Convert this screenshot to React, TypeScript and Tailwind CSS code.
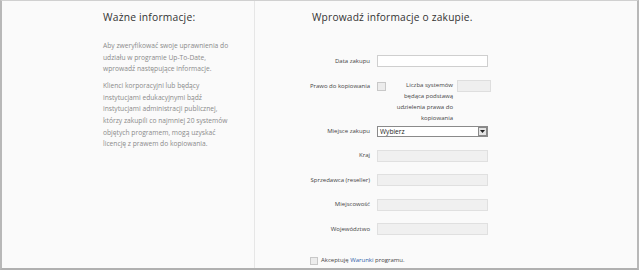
export default function App() {
  const rows = ["Kraj", "Sprzedawca (reseller)", "Miejscowość", "Województwo"];

  return (
    <div className="w-[640px] h-[271px] bg-white">
      <div
        className="w-[639px] h-[270px] bg-[#fafafa] border-l-2 border-r-2 border-b-2 border-t border-l-[#b8b8b8] border-r-[#b8b8b8] border-b-[#b0b0b0] border-t-[#d0d0d0] flex"
        style={{ fontFamily: '"Open Sans", "DejaVu Sans", sans-serif' }}
      >
        {/* left info column */}
        <div className="w-[253px] h-full border-r border-[#e6e6e6] pl-[101px] pr-2 pt-[8px] whitespace-nowrap">
          <h2 className="text-[10.3px] text-[#333] tracking-[0.2px] leading-[16px]">Ważne informacje:</h2>
          <div className="mt-[15px] text-[6.7px] leading-[11.6px] text-[#8a8a8a]">
            <p>
              Aby zweryfikować swoje uprawnienia do
              <br />
              udziału w programie Up-To-Date,
              <br />
              wprowadź następujące informacje.
            </p>
            <p className="mt-[5.5px]">
              Klienci korporacyjni lub będący
              <br />
              instytucjami edukacyjnymi bądź
              <br />
              instytucjami administracji publicznej,
              <br />
              którzy zakupili co najmniej 20 systemów
              <br />
              objętych programem, mogą uzyskać
              <br />
              licencję z prawem do kopiowania.
            </p>
          </div>
        </div>

        {/* right form column */}
        <div className="flex-1 h-full pt-[8px] whitespace-nowrap">
          <h2 className="pl-[57px] text-[10.2px] text-[#333] tracking-[0.2px] leading-[16px]">
            Wprowadź informacje o zakupie.
          </h2>

          <div className="mt-[30px] text-[6px] text-[#444]">
            <div className="flex items-center gap-[7px] h-[12px]">
              <span className="w-[115px] text-right">Data zakupu</span>
              <div className="w-[111px] h-[12px] bg-white border border-[#cfcfcf]" />
            </div>

            <div className="flex items-start mt-[13px]">
              <span className="w-[115px] text-right mt-[2px]">Prawo do kopiowania</span>
              <div className="ml-[7px] mt-[2px] w-[9px] h-[9px] bg-[#ececec] border border-[#c8c8c8]" />
              <span className="w-[64px] ml-[3px] text-right leading-[11px]">
                Liczba systemów
                <br />
                będąca podstawą
                <br />
                udzielenia prawa do
                <br />
                kopiowania
              </span>
              <div className="ml-[4px] w-[34px] h-[12px] bg-[#efefef] border border-[#dedede]" />
            </div>

            <div className="flex items-center gap-[7px] h-[11px] mt-[2px]">
              <span className="w-[115px] text-right">Miejsce zakupu</span>
              <div className="w-[111px] h-[11px] bg-white border border-[#8a8a8a] flex items-center justify-between">
                <span className="pl-[2px] text-[6.6px] text-[#222]">Wybierz</span>
                <div className="w-[9px] h-[9px] bg-[#e4e4e4] border border-[#888] flex items-center justify-center">
                  <svg width="5" height="3" viewBox="0 0 5 3">
                    <path d="M0 0 L5 0 L2.5 3 Z" fill="#222" />
                  </svg>
                </div>
              </div>
            </div>

            {rows.map((r) => (
              <div key={r} className="flex items-center gap-[7px] h-[12px] mt-[12.5px]">
                <span className="w-[115px] text-right">{r}</span>
                <div className="w-[111px] h-[12px] bg-[#f0f0f0] border border-[#e0e0e0]" />
              </div>
            ))}

            <div className="flex items-center pl-[55px] mt-[21px]">
              <div className="w-[8px] h-[8px] bg-[#ececec] border border-[#c8c8c8]" />
              <span className="ml-[3px]">
                Akceptuję <span className="text-[#2f5fa8]">Warunki</span> programu.
              </span>
            </div>
          </div>
        </div>
      </div>
    </div>
  );
}
